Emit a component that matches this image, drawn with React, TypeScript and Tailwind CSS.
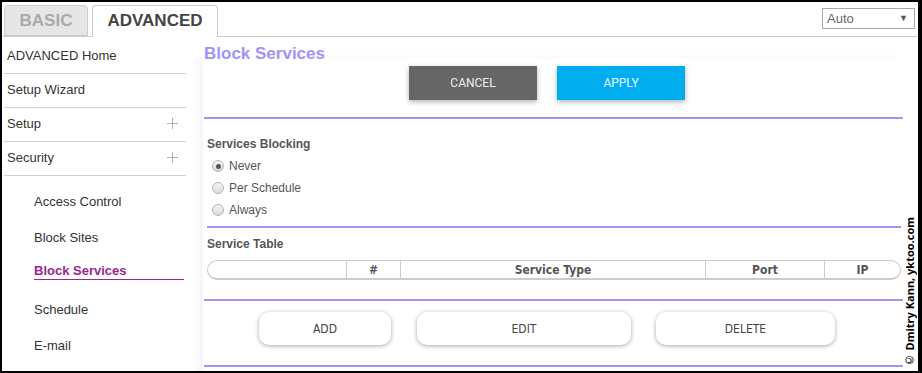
import React from "react";

const sans = { fontFamily: '"Liberation Sans", Arial, sans-serif' };
const narrow = { fontFamily: '"Liberation Sans Narrow", "DejaVu Sans Condensed", "Liberation Sans", sans-serif' };

function Radio({ checked, label }: { checked?: boolean; label: string }) {
  return (
    <div className="flex h-[22px] items-center pl-[9px]">
      <span className="flex h-[12px] w-[12px] items-center justify-center rounded-full border border-[#b5b5b5] bg-gradient-to-b from-[#f4f4f4] to-[#dcdcdc]">
        {checked && <span className="h-[5px] w-[5px] rounded-full bg-[#555]" />}
      </span>
      <span className="ml-[5px] text-[12px] text-[#555]">{label}</span>
    </div>
  );
}

function SideRow({ label, plus }: { label: string; plus?: boolean }) {
  return (
    <div className="flex h-[34px] items-center justify-between border-b border-[#d0d0d0] pb-[2px] pl-[3px] pr-[8px] text-[13px] text-[#333]">
      <span>{label}</span>
      {plus && (
        <svg width="11" height="11" viewBox="0 0 11 11">
          <path d="M5.5 0V11M0 5.5H11" stroke="#b0b0b0" strokeWidth="1" />
        </svg>
      )}
    </div>
  );
}

function Purple({ className = "" }: { className?: string }) {
  return <div className={"h-[2px] bg-[#9d97f3] " + className} />;
}

export default function App() {
  return (
    <div className="h-[373px] w-[922px] bg-black pb-[2px] pl-[2px] pr-[4px] pt-[2px]" style={sans}>
      <div className="relative h-[369px] w-[916px] overflow-hidden bg-white">
        {/* header */}
        <div className="flex h-[35px] items-start justify-between border-b border-[#cccccc] pl-[2px] pr-[3px]">
          <div className="flex h-full items-end gap-[4px]">
            <div className="flex h-[31px] w-[84px] items-center justify-center rounded-t-[4px] border border-[#cccccc] bg-[#e6e6e6] text-[17px] font-bold text-[#aaaaaa]">
              BASIC
            </div>
            <div className="mb-[-1px] flex h-[32px] w-[126px] items-center justify-center rounded-t-[4px] border border-b-0 border-[#cccccc] bg-white pb-[1px] text-[17px] font-bold text-[#444444]">
              ADVANCED
            </div>
          </div>
          <div className="mt-[6px] flex h-[21px] w-[93px] items-center justify-between border border-[#aaaaaa] pl-[4px] pr-[6px] text-[13px] text-[#666]">
            <span>Auto</span>
            <span className="text-[9px] text-[#555]">▼</span>
          </div>
        </div>

        {/* body */}
        <div className="flex">
          {/* sidebar */}
          <div className="ml-[2px] w-[182px] pt-[3px]">
            <SideRow label="ADVANCED Home" />
            <SideRow label="Setup Wizard" />
            <SideRow label="Setup" plus />
            <SideRow label="Security" plus />
            <div className="pl-[30px] pr-[2px] pt-[8px] text-[13px] text-[#333]">
              <div className="flex h-[36px] items-center">Access Control</div>
              <div className="flex h-[36px] items-center">Block Sites</div>
              <div className="flex h-[36px] items-start pt-[7px]">
                <span className="w-full border-b border-[#9b2590] font-bold leading-[16px] text-[#9b2590]">Block Services</span>
              </div>
              <div className="flex h-[36px] items-center">Schedule</div>
              <div className="flex h-[36px] items-center">E-mail</div>
            </div>
          </div>

          {/* main */}
          <div className="ml-[17px] w-[701px]">
            <div className="relative z-10 mt-[7px] h-[20px] pl-[1px] text-[17px] font-bold leading-[20px] text-[#9e95f7]">
              Block Services
            </div>
            <div className="mt-[-6px] h-[320px] bg-white shadow-[-6px_0_8px_rgba(0,0,0,0.04)]">
              <div className="flex gap-[20px] pl-[206px] pt-[8px]">
                <div className="flex h-[34px] w-[128px] items-center justify-center bg-[#666666] text-[12px] text-[#eeeeee] shadow-[0_2px_5px_rgba(0,0,0,0.3)]" style={{ fontFamily: "Roboto, sans-serif" }}>
                  CANCEL
                </div>
                <div className="flex h-[34px] w-[128px] items-center justify-center bg-[#00aeef] text-[12px] text-[#eef8ff] shadow-[0_2px_5px_rgba(0,0,0,0.3)]" style={{ fontFamily: "Roboto, sans-serif" }}>
                  APPLY
                </div>
              </div>
              <Purple className="mx-[1px] mt-[17px]" />
              <div className="mt-[18px] pl-[4px] text-[12px] font-bold leading-[14px] text-[#555]">Services Blocking</div>
              <div className="mt-[4px]">
                <Radio checked label="Never" />
                <Radio label="Per Schedule" />
                <Radio label="Always" />
              </div>
              <Purple className="ml-[4px] mr-[3px] mt-[5px]" />
              <div className="mt-[9px] pl-[4px] text-[12px] font-bold leading-[14px] text-[#555]">Service Table</div>
              <div
                className="ml-[4px] mr-[3px] mt-[9px] flex h-[20px] rounded-[10px] border border-b-2 border-[#cccccc] text-[12px] font-bold text-[#555]"
                style={narrow}
              >
                <div className="w-[139px] border-r border-[#cccccc]" />
                <div className="flex w-[54px] items-center justify-center border-r border-[#cccccc]">#</div>
                <div className="flex w-[305px] items-center justify-center border-r border-[#cccccc]">Service Type</div>
                <div className="flex w-[119px] items-center justify-center border-r border-[#cccccc]">Port</div>
                <div className="flex flex-1 items-center justify-center">IP</div>
              </div>
              <Purple className="mx-[1px] mt-[19px]" />
              <div className="mt-[11px] flex pl-[56px] text-[12px] text-[#444]" style={narrow}>
                <div className="flex h-[33px] w-[132px] items-center justify-center rounded-[10px] bg-white shadow-[0_1px_4px_rgba(0,0,0,0.35)]">ADD</div>
                <div className="ml-[26px] flex h-[33px] w-[214px] items-center justify-center rounded-[10px] bg-white shadow-[0_1px_4px_rgba(0,0,0,0.35)]">EDIT</div>
                <div className="ml-[25px] flex h-[33px] w-[179px] items-center justify-center rounded-[10px] bg-white shadow-[0_1px_4px_rgba(0,0,0,0.35)]">DELETE</div>
              </div>
              <Purple className="mx-[1px] mt-[20px]" />
            </div>
          </div>
        </div>

        {/* watermark */}
        <div
          className="absolute bottom-[3px] right-[2px] whitespace-nowrap text-[11px] font-bold leading-[13px] text-black [writing-mode:vertical-rl] rotate-180"
          style={{ fontFamily: '"Open Sans", "DejaVu Sans", sans-serif' }}
        >
          © Dmitry Kann, yktoo.com
        </div>
      </div>
    </div>
  );
}
